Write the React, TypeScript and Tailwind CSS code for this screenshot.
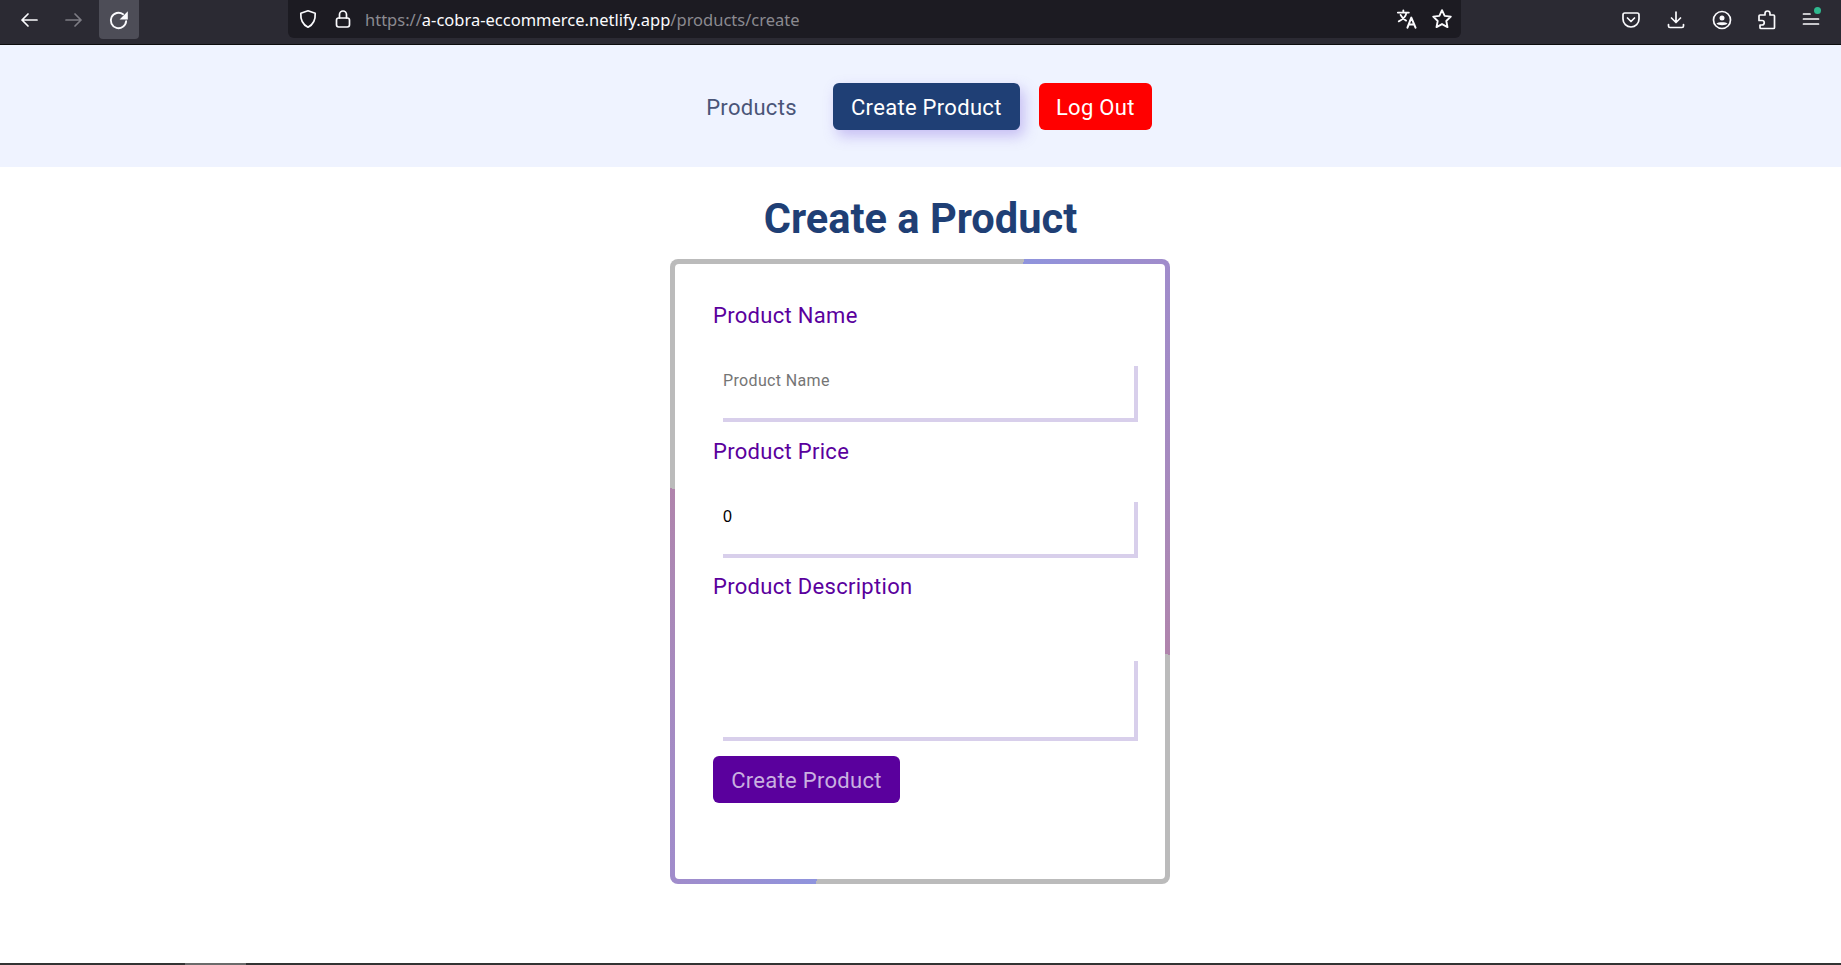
import React from "react";

const stroke = { fill: "none", stroke: "currentColor", strokeWidth: 1.7, strokeLinecap: "round" as const, strokeLinejoin: "round" as const };

function Ico({ className, children }: { className?: string; children: React.ReactNode }) {
  return (
    <svg viewBox="0 0 20 20" className={className ?? "w-5 h-5"} {...stroke}>
      {children}
    </svg>
  );
}

function Field({ label, placeholder, value, area }: { label: string; placeholder?: string; value?: string; area?: boolean }) {
  return (
    <div className="flex flex-col">
      <label className="h-[26px] pt-[1px] text-[22px] leading-[26px] tracking-[0.3px] text-[#5a009d]">{label}</label>
      {area ? (
        <textarea
          readOnly
          className="mt-[62px] ml-[10px] h-[80px] resize-none border-r-4 border-b-4 border-[#d8cfeb] bg-white outline-none"
        />
      ) : (
        <input
          readOnly
          value={value ?? ""}
          placeholder={placeholder}
          className="mt-[38px] ml-[10px] h-[56px] border-r-4 border-b-4 border-[#d8cfeb] bg-white pb-[22px] font-['Liberation_Sans',sans-serif] text-[16px] text-black outline-none placeholder:font-['Roboto',sans-serif] placeholder:tracking-[0.35px] placeholder:text-[#757575]"
        />
      )}
    </div>
  );
}

export default function App() {
  return (
    <div className="flex min-h-screen flex-col bg-white font-['Roboto',sans-serif]">
      <header className="flex h-[45px] items-center border-b border-[#0c0c0d] bg-[#2b2a33] text-[#fbfbfe]">
        <div className="flex w-[288px] items-center self-stretch pb-[5px]">
          <div className="ml-[19px] flex w-[20px] justify-center">
            <Ico><path d="M18 10H3M9 4l-6 6 6 6" /></Ico>
          </div>
          <div className="ml-[25px] flex w-[20px] justify-center text-[#7d7c84]">
            <Ico><path d="M2 10h15M11 4l6 6-6 6" /></Ico>
          </div>
          <div className="ml-[15px] flex h-[39px] w-[40px] items-center justify-center rounded-b-[4px] bg-[#4d4d57]">
            <Ico className="h-[22px] w-[22px]">
              <path d="M16.500 11a7 7 0 1 1-2.800-6.200" />
              <path d="M18 2v7.500h-7.500z" fill="currentColor" stroke="none" />
            </Ico>
          </div>
        </div>
        <div className="flex h-[38px] w-[1173px] items-center self-start rounded-b-[6px] bg-[#1c1b22] pr-[8px] pl-[10px]">
          <svg viewBox="0 0 20 20" className="h-5 w-5" {...stroke}>
            <path d="M10 1.800l7.200 2.400c.4 6.600-2 11.400-7.200 14-5.200-2.600-7.600-7.400-7.200-14z" />
          </svg>
          <svg viewBox="0 0 20 20" className="ml-[15px] h-5 w-5" {...stroke}>
            <rect x="3.500" y="9" width="13" height="9" rx="2.200" />
            <path d="M6.500 9V5.500a3.500 3.500 0 0 1 7 0V9" />
          </svg>
          <div className="mt-[3px] ml-[12px] font-['Noto_Sans',sans-serif] text-[16.5px] whitespace-nowrap text-[#8b8a90]">
            https://<span className="text-[#fbfbfe]">a-cobra-eccommerce.netlify.app</span>/products/create
          </div>
          <div className="ml-auto flex items-center gap-[13px]">
            <svg viewBox="0 0 24 24" className="h-[22px] w-[22px]" {...stroke} strokeWidth={2}>
              <path d="M2 5h12M8 2.500V5M11.500 5c-.8 4-4 7.500-8.500 9.500M5 7.500c1.200 2.700 3.400 5 6 6.200" />
              <path d="M12.500 21.500l4.200-11 4.600 11M14 18h6" strokeWidth={2.2} />
            </svg>
            <Ico className="h-[22px] w-[22px]">
              <path d="M10 2l2.400 5.200 5.600.7-4.100 3.900 1.100 5.600L10 14.600l-5 2.800 1.100-5.600L2 7.900l5.600-.7z" />
            </Ico>
          </div>
        </div>
        <div className="flex flex-1 items-center self-stretch pb-[5px] pl-[160px]">
          <Ico>
            <path d="M3.800 3h12.400c1 0 1.800.8 1.800 1.800V9c0 4.600-3.600 8-8 8s-8-3.400-8-8V4.800c0-1 .8-1.800 1.800-1.800z" />
            <path d="M6.500 8l3.500 3.500L13.500 8" />
          </Ico>
          <div className="ml-[25px]">
            <Ico>
              <path d="M10 2v10M5.500 8l4.500 4.500L14.500 8M2.500 14.500V16c0 1 .6 1.500 1.500 1.500h12c.9 0 1.500-.5 1.500-1.500v-1.500" />
            </Ico>
          </div>
          <div className="ml-[26px]">
            <Ico>
              <circle cx="10" cy="10" r="8.500" />
              <circle cx="10" cy="8" r="2.500" fill="currentColor" stroke="none" />
              <path d="M4.500 13.500c1.500-1.800 9.500-1.800 11 0-1.500 2.200-9.500 2.200-11 0z" fill="currentColor" stroke="none" />
            </Ico>
          </div>
          <div className="ml-[24px]">
            <Ico>
              <path d="M9 5V3.500a2.500 2.500 0 0 1 5 0V5h3.500a1 1 0 0 1 1 1v11.500a1 1 0 0 1-1 1H5a1 1 0 0 1-1-1V15h2a2.200 2.200 0 0 0 0-4.500H3V6a1 1 0 0 1 1-1z" />
            </Ico>
          </div>
          <div className="relative ml-[25px]">
            <Ico><path d="M2.500 4H9M2.500 9h15M2.500 14h15" /></Ico>
            <span className="absolute -top-[3px] right-0 h-[7px] w-[7px] rounded-full bg-[#2fb98f]" />
          </div>
        </div>
      </header>

      <nav className="flex h-[122px] items-start justify-center bg-[#eff3ff] pt-[38px] pl-[17px] text-[22px] tracking-[0.3px]">
        <a className="mr-[36px] flex h-[47px] items-center pt-[1px] text-[#4a5578]">Products</a>
        <a className="mr-[19px] flex h-[47px] w-[187px] items-center justify-center rounded-[6px] bg-[#1f3f75] pt-[1px] text-white shadow-[4px_6px_14px_rgba(120,90,220,0.35)]">
          Create Product
        </a>
        <a className="flex h-[47px] w-[113px] items-center justify-center rounded-[6px] bg-[#ff0000] pt-[1px] text-white">Log Out</a>
      </nav>

      <main className="flex flex-1 flex-col items-center">
        <h1 className="mt-[29px] text-[41.6px] leading-[46px] font-bold text-[#1f3f75]">Create a Product</h1>
        <div className="mt-[17px] mr-[1px] h-[625px] w-[500px] rounded-[8px] bg-[conic-gradient(from_18.5deg,#8f94dd_0deg,#a08ccb_20deg,#ab88b5_70deg,#b084ac_90deg,#bbbbbb_90deg,#bbbbbb_180deg,#8f94dd_180deg,#a08ccb_200deg,#ab88b5_250deg,#b084ac_270deg,#bbbbbb_270deg)] p-[5px]">
          <form className="flex h-full flex-col rounded-[4px] bg-white pt-[38px] pr-[27px] pl-[38px]">
            <Field label="Product Name" placeholder="Product Name" />
            <div className="mt-[16px]"><Field label="Product Price" value="0" /></div>
            <div className="mt-[15px]"><Field label="Product Description" area /></div>
            <button
              type="button"
              className="mt-[15px] h-[47px] w-[187px] rounded-[6px] bg-[#5a009d] pt-[1px] text-[22px] tracking-[0.3px] text-[#c9b0e0]"
            >
              Create Product
            </button>
          </form>
        </div>
      </main>

      <footer className="h-[2px] bg-[#333333] pl-[185px]">
        <div className="h-full w-[61px] bg-[#6b6b6b]" />
      </footer>
    </div>
  );
}
